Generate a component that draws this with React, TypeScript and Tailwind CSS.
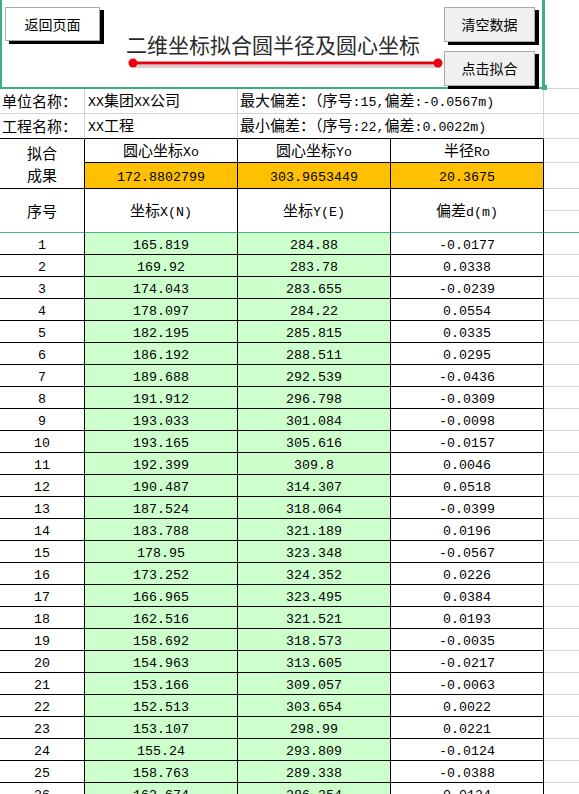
import React from "react";

const COLS = "grid grid-cols-[85px_153px_153px_153px_1fr]";

const rows: [number, string, string, string][] = [
  [1, "165.819", "284.88", "-0.0177"],
  [2, "169.92", "283.78", "0.0338"],
  [3, "174.043", "283.655", "-0.0239"],
  [4, "178.097", "284.22", "0.0554"],
  [5, "182.195", "285.815", "0.0335"],
  [6, "186.192", "288.511", "0.0295"],
  [7, "189.688", "292.539", "-0.0436"],
  [8, "191.912", "296.798", "-0.0309"],
  [9, "193.033", "301.084", "-0.0098"],
  [10, "193.165", "305.616", "-0.0157"],
  [11, "192.399", "309.8", "0.0046"],
  [12, "190.487", "314.307", "0.0518"],
  [13, "187.524", "318.064", "-0.0399"],
  [14, "183.788", "321.189", "0.0196"],
  [15, "178.95", "323.348", "-0.0567"],
  [16, "173.252", "324.352", "0.0226"],
  [17, "166.965", "323.495", "0.0384"],
  [18, "162.516", "321.521", "0.0193"],
  [19, "158.692", "318.573", "-0.0035"],
  [20, "154.963", "313.605", "-0.0217"],
  [21, "153.166", "309.057", "-0.0063"],
  [22, "152.513", "303.654", "0.0022"],
  [23, "153.107", "298.99", "0.0221"],
  [24, "155.24", "293.809", "-0.0124"],
  [25, "158.763", "289.338", "-0.0388"],
  [26, "162.674", "286.354", "0.0124"],
];

// half-width chars in a mono face, CJK in Noto; wrapped so flex sees one item
const Mix = ({ s }: { s: string }) => {
  const parts = s.split(/([\x00-\x7f]+)/).filter(Boolean);
  return (
    <span className="whitespace-nowrap">
      {parts.map((p, i) =>
        /^[\x00-\x7f]+$/.test(p) ? (
          <span key={i} className="font-['Liberation_Mono',monospace] text-[13.3px]">
            {p}
          </span>
        ) : (
          <span key={i}>{p}</span>
        ),
      )}
    </span>
  );
};

const Btn = ({ label }: { label: string }) => (
  <div className="flex h-[35px] w-[91px] items-center justify-center border border-[#a9a9a9] bg-[#f0f0f0] text-[14px] text-black shadow-[4px_3px_0_#000]">
    {label}
  </div>
);

const Cell = ({
  children,
  className = "",
}: {
  children?: React.ReactNode;
  className?: string;
}) => (
  <div className={`flex items-center justify-center border-r border-b border-black leading-none ${className}`}>
    {children}
  </div>
);

export default function App() {
  return (
    <div className="min-h-[794px] w-full overflow-hidden bg-white font-['Noto_Sans_CJK_SC',sans-serif] text-[15px] text-black">
      {/* top panel with buttons and title */}
      <div className="flex">
        <div className="relative flex h-[89px] w-[545px] shrink-0 items-start border-r-[3px] border-b-2 border-l-2 border-[#3bb086]">
          <div className="mt-[7px] ml-[3px]">
            <div className="flex h-[34px] w-[95px] items-center justify-center border border-[#a9a9a9] bg-white text-[14px] shadow-[4px_3px_0_#000]">
              返回页面
            </div>
          </div>
          <div className="ml-[26px] flex flex-col">
            <div className="mt-[32px] h-[24px] text-[21px] leading-[24px] text-[#2a2a2a]">
              二维坐标拟合圆半径及圆心坐标
            </div>
            <svg width="316" height="14" className="mt-[2px] ml-[2px]">
              <line x1="6" y1="8.5" x2="312" y2="8.5" stroke="#000" strokeOpacity="0.18" strokeWidth="3" />
              <line x1="5" y1="5" x2="310" y2="5" stroke="#e3000f" strokeWidth="3" />
              <circle cx="5" cy="5" r="4.5" fill="#f0000f" />
              <circle cx="310" cy="5" r="4.5" fill="#f0000f" />
            </svg>
          </div>
          <div className="mt-[7px] mr-[7px] ml-auto flex flex-col gap-[9px]">
            <Btn label="清空数据" />
            <Btn label="点击拟合" />
          </div>
          <div className="absolute -right-[5px] -bottom-[3px] h-[5px] w-[5px] bg-[#3bb086]" />
        </div>
        <div className="h-[89px] flex-1 border-b border-[#d4d4d4]" />
      </div>

      {/* info rows */}
      <div className={`${COLS} h-[25px]`}>
        <div className="flex items-center border-r border-b border-[#d4d4d4] pl-[2px]">单位名称：</div>
        <div className="flex items-center border-r border-b border-[#d4d4d4] pl-[3px]">
          <Mix s="XX集团XX公司" />
        </div>
        <div className="col-span-2 flex items-center border-r border-b border-[#d4d4d4] pl-[2px]">
          <Mix s="最大偏差：（序号:15,偏差:-0.0567m)" />
        </div>
        <div className="border-b border-[#d4d4d4]" />
      </div>
      <div className={`${COLS} h-[25px]`}>
        <div className="flex items-center border-r border-b border-r-[#d4d4d4] border-b-black pl-[2px]">工程名称：</div>
        <div className="flex items-center border-r border-b border-r-[#d4d4d4] border-b-black pl-[3px]">
          <Mix s="XX工程" />
        </div>
        <div className="col-span-2 flex items-center border-r border-b border-r-[#d4d4d4] border-b-black pl-[2px]">
          <Mix s="最小偏差：（序号:22,偏差:0.0022m)" />
        </div>
        <div className="border-b border-[#d4d4d4]" />
      </div>

      {/* fit result block */}
      <div className={`${COLS} grid-rows-[24px_26px_44px]`}>
        <Cell className="row-span-2 flex-col gap-[7px]">
          <span>拟合</span>
          <span>成果</span>
        </Cell>
        <Cell>
          <Mix s="圆心坐标Xo" />
        </Cell>
        <Cell>
          <Mix s="圆心坐标Yo" />
        </Cell>
        <Cell>
          <Mix s="半径Ro" />
        </Cell>
        <div className="border-b border-[#d4d4d4]" />
        <Cell className="bg-[#ffc000]">
          <Mix s="172.8802799" />
        </Cell>
        <Cell className="bg-[#ffc000]">
          <Mix s="303.9653449" />
        </Cell>
        <Cell className="bg-[#ffc000]">
          <Mix s="20.3675" />
        </Cell>
        <div className="border-b border-[#d4d4d4]" />
        <Cell className="border-b-[#4fb08e]">序号</Cell>
        <Cell className="border-b-[#4fb08e]">
          <Mix s="坐标X(N)" />
        </Cell>
        <Cell className="border-b-[#4fb08e]">
          <Mix s="坐标Y(E)" />
        </Cell>
        <Cell className="border-b-[#4fb08e]">
          <Mix s="偏差d(m)" />
        </Cell>
        <div className="flex flex-col border-b border-[#4fb08e]">
          <div className="h-[22px] border-b border-[#d4d4d4]" />
        </div>
      </div>

      {/* data rows */}
      {rows.map(([n, x, y, d]) => (
        <div key={n} className={`${COLS} h-[22px]`}>
          <Cell>
            <Mix s={String(n)} />
          </Cell>
          <Cell className="bg-[#ccffcc]">
            <Mix s={x} />
          </Cell>
          <Cell className="bg-[#ccffcc]">
            <Mix s={y} />
          </Cell>
          <Cell>
            <Mix s={d} />
          </Cell>
          <div className="border-b border-[#d4d4d4]" />
        </div>
      ))}
    </div>
  );
}
